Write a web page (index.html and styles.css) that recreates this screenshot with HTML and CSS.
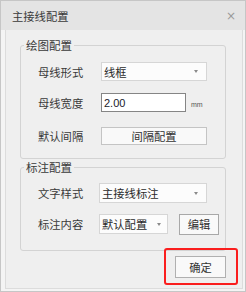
FILE: index.html
```html
<!DOCTYPE html>
<html lang="zh">
<head>
<meta charset="utf-8">
<title>主接线配置</title>
<link rel="stylesheet" href="styles.css">
</head>
<body>
<div class="window">
  <div class="titlebar">
    <span class="title">主接线配置</span>
    <span class="close">×</span>
  </div>
  <div class="content">
    <fieldset class="group">
      <legend>绘图配置</legend>
      <div class="group-inner">
        <div class="row">
          <span class="label">母线形式</span>
          <div class="select w106"><span>线框</span><i class="arrow"></i></div>
        </div>
        <div class="row">
          <span class="label">母线宽度</span>
          <div class="input"><span>2.00</span></div>
          <span class="unit">mm</span>
        </div>
        <div class="row row-wide">
          <span class="label">默认间隔</span>
          <div class="btn btn-wide">间隔配置</div>
        </div>
      </div>
    </fieldset>
    <fieldset class="group group2">
      <legend>标注配置</legend>
      <div class="group-inner inner2">
        <div class="row row2">
          <span class="label label2">文字样式</span>
          <div class="select w108"><span>主接线标注</span><i class="arrow"></i></div>
        </div>
        <div class="row row2">
          <span class="label label2">标注内容</span>
          <div class="select w69"><span>默认配置</span><i class="arrow"></i></div>
          <div class="btn btn-edit">编辑</div>
        </div>
      </div>
    </fieldset>
    <div class="footer">
      <div class="btn btn-ok">确定<span class="highlight"></span></div>
    </div>
  </div>
</div>
</body>
</html>
```

FILE: styles.css
```css
html, body {
  margin: 0;
  padding: 0;
  background: #ffffff;
}
body {
  font-family: "Noto Sans CJK SC", "Microsoft YaHei", sans-serif;
  color: #333;
}
.window {
  width: 246px;
  height: 292px;
  box-sizing: border-box;
  border: 1px solid #c6c6c6;
  background: #f4f4f4;
  display: flex;
  flex-direction: column;
}
.titlebar {
  height: 29px;
  background: #e4e4e4;
  display: flex;
  align-items: center;
  justify-content: space-between;
  padding: 0 9px 0 11px;
  flex-shrink: 0;
}
.title {
  font-size: 11.3px;
  line-height: 14px;
  color: #3a3a3a;
}
.close {
  font-family: "DejaVu Sans", sans-serif;
  font-size: 12px;
  line-height: 12px;
  color: #9a9a9a;
}
.content {
  flex: 1;
  margin: 0 2px 2px 4px;
  border: 1px solid #dcdcdc;
  border-top: none;
  background: #efefef;
  padding: 8px 16px 0 14px;
}
.group {
  margin: 0;
  padding: 0;
  border: 1px solid #d3d3d3;
  border-radius: 3px;
  min-width: 0;
}
.group legend {
  margin-left: 3px;
  padding: 0 2px;
  font-size: 11.5px;
  line-height: 14px;
  color: #3a3a3a;
}
.group2 {
  margin-top: 1px;
}
.group-inner {
  display: flex;
  flex-direction: column;
  padding: 10px 0 13px 17px;
}
.inner2 {
  padding: 9px 0 16px 17px;
}
.row {
  display: flex;
  align-items: center;
  height: 19px;
}
.row + .row {
  margin-top: 12px;
}
.row + .row-wide {
  margin-top: 14px;
}
.row2 {
  height: 20px;
}
.row2 + .row2 {
  margin-top: 11px;
}
.label {
  width: 63px;
  flex-shrink: 0;
  font-size: 11.3px;
  line-height: 14px;
  color: #3a3a3a;
}
.label2 {
  width: 61px;
}
.select {
  box-sizing: border-box;
  height: 19px;
  background: #fcfcfc;
  border: 1px solid #d6d6d6;
  display: flex;
  align-items: center;
  justify-content: space-between;
  padding: 0 8px 0 2px;
  font-size: 11.3px;
  line-height: 14px;
  color: #2a2a2a;
}
.row2 .select {
  height: 20px;
}
.w106 { width: 106px; }
.w108 { width: 108px; }
.w69 { width: 69px; padding-right: 6px; }
.arrow {
  width: 0;
  height: 0;
  border-left: 2px solid transparent;
  border-right: 2px solid transparent;
  border-top: 3px solid #8a8a8a;
}
.input {
  box-sizing: border-box;
  width: 85px;
  height: 19px;
  background: #ffffff;
  border: 1px solid #858585;
  display: flex;
  align-items: center;
  padding: 0 2px;
  font-family: "Liberation Sans", sans-serif;
  font-size: 11px;
  line-height: 14px;
  color: #1a1a2a;
}
.unit {
  margin-left: 5px;
  margin-top: 4px;
  font-family: "Liberation Sans", sans-serif;
  font-size: 7px;
  color: #555;
}
.btn {
  box-sizing: border-box;
  background: #f9f9f9;
  border: 1px solid #c4c4c4;
  display: flex;
  align-items: center;
  justify-content: center;
  font-size: 11.3px;
  line-height: 14px;
  color: #333;
}
.btn-wide {
  width: 106px;
  height: 18px;
}
.btn-edit {
  width: 40px;
  height: 21px;
  margin-left: 11px;
  border-color: #a8a8a8;
}
.footer {
  display: flex;
  justify-content: flex-end;
  margin-top: 5px;
}
.btn-ok {
  position: relative;
  width: 51px;
  height: 22px;
  border-color: #b0b0b0;
}
.highlight {
  position: absolute;
  left: -12px;
  top: -9px;
  width: 74px;
  height: 37px;
  box-sizing: border-box;
  border: 2px solid #fa1e1e;
  border-radius: 3px;
}
```
